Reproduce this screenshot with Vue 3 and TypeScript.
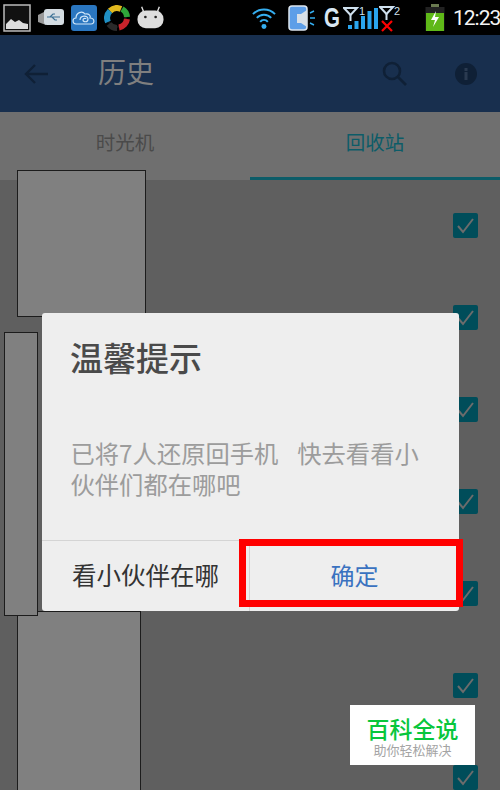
<script setup lang="ts">
const rows: number[] = [0, 1, 2, 3, 4, 5, 6]
const bars: { x: number; h: number }[] = [
  { x: 5, h: 4 }, { x: 11.5, h: 8 }, { x: 18, h: 13 }, { x: 24.5, h: 18 }, { x: 31, h: 21 },
]
</script>

<template>
  <div class="page">
    <header class="status">
      <div class="status-left">
        <svg width="28" height="28" viewBox="0 0 28 28">
          <rect x="1" y="1" width="26" height="26" fill="#111" stroke="#bbb" stroke-width="1.500" />
          <path d="M3 25v-5l5-5 4 3 4-2 4 3 5 1v5z" fill="#ddd" />
        </svg>
        <svg width="26" height="20" viewBox="0 0 26 20">
          <path d="M0 7l8-4v14l-8-3z" fill="#9a9a9a" />
          <rect x="6" y="1" width="20" height="16" rx="3" fill="#d4dce2" />
          <path d="M9 9h13M12 9l3-3h2M14 9l3 3h2" stroke="#3a6f94" stroke-width="1.200" fill="none" />
        </svg>
        <svg width="26" height="26" viewBox="0 0 26 26">
          <rect width="26" height="26" rx="3" fill="#2a76c0" />
          <path d="M5 19c-4 0-4-6 0-6 0-5 6-8 9-4 4-1 6 2 5 4 5 0 5 6 1 6z" fill="none" stroke="#cfe6f8" stroke-width="1.200" />
          <path d="M9 15c0-5 8-5 8-1s-5 3-5 1 3-2 3-1" fill="none" stroke="#cfe6f8" stroke-width="1.200" />
        </svg>
        <svg width="26" height="26" viewBox="0 0 26 26" fill="none" stroke-width="6">
          <circle cx="13" cy="13" r="9" stroke="#111" stroke-width="2" />
          <path d="M6 6a10 10 0 0 1 11-2" stroke="#e0b81e" />
          <path d="M18 4a10 10 0 0 1 5 8" stroke="#2fa53a" />
          <path d="M23 14a10 10 0 0 1-8 8.500" stroke="#c8232b" />
          <path d="M13 23a10 10 0 0 1-8-4" stroke="#2a2a2a" />
          <path d="M4 17a10 10 0 0 1 2-11" stroke="#1f8fc4" />
        </svg>
        <svg width="27" height="26" viewBox="0 0 29 26">
          <path d="M7 6L5 1M22 6l2-5" stroke="#ddd" stroke-width="1.500" />
          <rect x="0.500" y="5" width="28" height="19" rx="9" fill="#ddd" />
          <circle cx="9" cy="12" r="1.400" fill="#222" />
          <circle cx="20" cy="12" r="1.400" fill="#222" />
        </svg>
      </div>
      <div class="status-right">
        <svg width="24" height="25" viewBox="0 0 25 25" fill="none" stroke="#35aef0" stroke-width="2">
          <path d="M1 9a16 16 0 0 1 23 0M5 13a10 10 0 0 1 15 0M8.500 17a5 5 0 0 1 8 0" />
          <circle cx="12.500" cy="22" r="2.600" fill="#35aef0" stroke="none" />
        </svg>
        <svg class="call" width="28" height="26" viewBox="0 0 28 26">
          <rect x="1" y="1" width="18" height="24" rx="3" fill="#5d9ee8" stroke="#dde6f0" stroke-width="1.500" />
          <path d="M9 9h4l6-4v17l-6-4H9z" fill="#d8e0e8" />
          <path d="M22 8l4-2M22 13h5M22 18l4 2" stroke="#35aef0" stroke-width="1.400" />
        </svg>
        <span class="g">G</span>
        <svg class="sig" width="36" height="26" viewBox="0 0 36 26">
          <path d="M1 3h13L7.500 10z" fill="none" stroke="#cfe0ee" stroke-width="2" />
          <path d="M7.500 10v6" stroke="#cfe0ee" stroke-width="2" />
          <text x="16" y="10" class="sub">1</text>
          <g fill="#2aa5ee">
            <rect v-for="b in bars" :key="b.x" :x="b.x" :y="24 - b.h" width="4" :height="b.h" />
          </g>
        </svg>
        <svg class="sig2" width="23" height="28" viewBox="0 0 23 28">
          <path d="M1 3h13L7.500 10z" fill="none" stroke="#cfe0ee" stroke-width="2" />
          <path d="M7.500 10v6" stroke="#cfe0ee" stroke-width="2" />
          <text x="15" y="11" class="sub">2</text>
          <path d="M3 17l10 10M13 17L3 27" stroke="#f00" stroke-width="2.200" />
        </svg>
        <svg class="bat" width="20" height="27" viewBox="0 0 20 27">
          <rect x="6" y="0" width="8" height="3" fill="#6a7a50" />
          <rect x="0.500" y="3" width="19" height="24" fill="#222" />
          <rect x="1" y="9" width="18" height="18" fill="#5fb818" />
          <path d="M11 7l-5 9h4l-2 7 6-10h-4z" fill="#fff" />
        </svg>
        <span class="time">12:23</span>
      </div>
    </header>

    <div class="appbar">
      <svg width="24" height="24" viewBox="0 0 24 24" fill="none" stroke="#0f2036" stroke-width="2.400">
        <path d="M24 12H2M11 3l-9 9 9 9" />
      </svg>
      <h1 class="title">历史</h1>
      <svg class="search" width="25" height="26" viewBox="0 0 25 26" fill="none" stroke="#0f2036" stroke-width="2.600">
        <circle cx="10" cy="10" r="8" />
        <path d="M16 16l8 8" />
      </svg>
      <svg width="22" height="22" viewBox="0 0 22 22">
        <circle cx="11" cy="11" r="11" fill="#0f2036" />
        <rect x="9.500" y="9" width="3" height="8" fill="#2a3a50" />
        <rect x="9.500" y="5" width="3" height="3" fill="#2a3a50" />
      </svg>
    </div>

    <nav class="tabs">
      <div class="tab">时光机</div>
      <div class="tab active">回收站</div>
    </nav>

    <main class="list">
      <div v-for="r in rows" :key="r" class="check">
        <svg width="25" height="25" viewBox="0 0 25 25">
          <rect width="25" height="25" rx="2" fill="#004d5a" />
          <path d="M5 13l5 6L20 6" fill="none" stroke="#6c6c6c" stroke-width="2" />
        </svg>
      </div>
    </main>

    <div class="block b1"></div>
    <div class="dialog">
      <h2 class="d-title">温馨提示</h2>
      <p class="d-body">已将7人还原回手机&nbsp;&nbsp;快去看看小<br />伙伴们都在哪吧</p>
      <div class="d-actions">
        <button class="d-btn left">看小伙伴在哪</button>
        <button class="d-btn right">确定</button>
      </div>
    </div>
    <div class="block b3"></div>
    <div class="block b2"></div>
    <div class="highlight"></div>
    <div class="mark">
      <div class="mark-top">百科全说</div>
      <div class="mark-sub">助你轻松解决</div>
    </div>
  </div>
</template>

<style scoped>
.page {
  position: relative;
  width: 500px;
  height: 790px;
  overflow: hidden;
  display: flex;
  flex-direction: column;
  background: #5f5f5f;
  font-family: "Noto Sans CJK SC", "Noto Sans", sans-serif;
}
.status {
  height: 35px;
  flex: none;
  background: #000;
  display: flex;
  justify-content: space-between;
  align-items: center;
  padding-left: 3px;
}
.status-left {
  display: flex;
  align-items: center;
  gap: 7px;
}
.status-right {
  display: flex;
  align-items: center;
}
.call {
  margin-left: 12px;
}
.g {
  margin-left: 8px;
  width: 19px;
  font: bold 27px/30px "Liberation Sans", sans-serif;
  color: #d8e6f2;
  transform: scaleX(0.76);
  transform-origin: left center;
}
.sig2 {
  margin-left: 0;
}
.sub {
  font: 11px "Liberation Sans", sans-serif;
  fill: #cfe0ee;
}
.bat {
  margin-left: 23px;
  margin-right: 8px;
}
.time {
  width: 47px;
  font: 21px/30px Roboto, sans-serif;
  letter-spacing: -1px;
  color: #f4f4f4;
  white-space: nowrap;
}
.appbar {
  height: 77px;
  flex: none;
  background: #182f4e;
  display: flex;
  align-items: center;
  padding: 0 23px 0 24px;
}
.title {
  flex: 1;
  margin: 0 0 6px 50px;
  font-size: 28px;
  font-weight: 400;
  color: #7f7f7f;
}
.search {
  margin-right: 48px;
}
.tabs {
  height: 68px;
  flex: none;
  background: #6f6f6f;
  display: flex;
}
.tab {
  flex: 1;
  text-align: center;
  font-size: 19.500px;
  line-height: 59px;
  color: #4a4a4a;
}
.tab.active {
  color: #0c5c68;
  border-bottom: 3px solid #0c5c68;
}
.list {
  flex: 1;
  min-height: 0;
  display: flex;
  flex-direction: column;
  align-items: flex-end;
  padding: 33px 22px 0 0;
  gap: 67px;
}
.check {
  height: 25px;
  flex: none;
}
.block {
  position: absolute;
  box-sizing: border-box;
  background: #808080;
  border: 1px solid #1c1c1c;
}
.b1 {
  left: 17px;
  top: 170px;
  width: 129px;
  height: 147px;
}
.b2 {
  left: 4px;
  top: 332px;
  width: 34px;
  height: 284px;
}
.b3 {
  left: 17px;
  top: 611px;
  width: 124px;
  height: 185px;
}
.dialog {
  position: absolute;
  left: 42px;
  top: 313px;
  width: 417px;
  height: 298px;
  background: #eeeeee;
  border-radius: 3px;
  display: flex;
  flex-direction: column;
}
.d-title {
  margin: 24px 0 0 28px;
  font-size: 33px;
  line-height: 40px;
  font-weight: 500;
  color: #4a4a4a;
}
.d-body {
  margin: 60px 0 0 28.500px;
  font-size: 24.300px;
  line-height: 31px;
  word-spacing: 4px;
  color: #9c9c9c;
  white-space: nowrap;
}
.d-actions {
  margin-top: auto;
  height: 70px;
  border-top: 1px solid #d4d4d4;
  display: flex;
}
.d-btn {
  background: none;
  border: 0;
  padding: 0 0 4px;
  font-family: inherit;
  font-size: 24px;
}
.left {
  width: 207px;
  color: #333;
  font-size: 24.500px;
}
.right {
  flex: 1;
  color: #3a72c0;
  border-left: 1px solid #d4d4d4;
}
.highlight {
  position: absolute;
  left: 239px;
  top: 539px;
  width: 224px;
  height: 68px;
  box-sizing: border-box;
  border: 7px solid #ff0000;
}
.mark {
  position: absolute;
  left: 350px;
  top: 705px;
  width: 125px;
  height: 60px;
  background: #fff;
  display: flex;
  flex-direction: column;
  align-items: center;
}
.mark-top {
  margin-top: 10px;
  font-size: 23px;
  line-height: 26px;
  font-weight: 500;
  color: #08c63c;
}
.mark-sub {
  margin-top: 1px;
  font-size: 13px;
  line-height: 16px;
  color: #a4a4a4;
}
</style>

<style>
html,
body {
  margin: 0;
  background: #5f5f5f;
}
</style>
